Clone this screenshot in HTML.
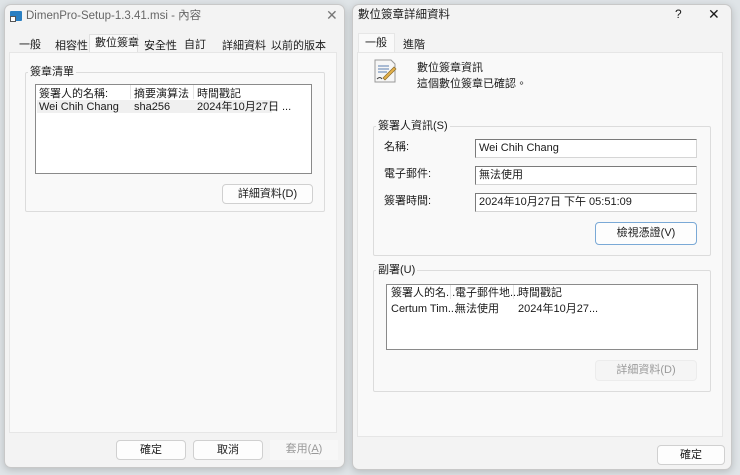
<!DOCTYPE html>
<html><head><meta charset="utf-8"><style>
*{box-sizing:border-box;margin:0;padding:0}
body{width:740px;height:475px;background:#dfe4e7;font-family:"Liberation Sans","Noto Sans CJK TC",sans-serif;font-size:11px;line-height:13px;color:#1a1a1a;position:relative;overflow:hidden}
.a{position:absolute}
.win{background:#f3f3f3;border:1px solid #c8c8c8;border-radius:7px;box-shadow:0 2px 8px rgba(0,0,0,.18)}
.panel{background:#f9f9f9;border:1px solid #e6e6e6}
.grp{border:1px solid #dcdcdc;border-radius:2px}
.lbl{background:#f9f9f9;padding:0 2px}
.btn{background:#fdfdfd;border:1px solid #d0d0d0;border-radius:4px;text-align:center;line-height:18px}
.list{background:#fff;border:1px solid #8a8a8a}
.tb{background:#fff;border:1px solid #d5d5d5;border-left:1px solid #7a7a7a;border-top:1px solid #7a7a7a;padding-left:3px;line-height:17px;font-size:11px}
</style></head><body>
<!-- left window -->
<div class="a win" style="left:4px;top:4px;width:341px;height:464px"></div>
<div class="a" style="left:10px;top:11px;width:12px;height:10px;background:#2a7fc2;border-radius:1px"></div>
<div class="a" style="left:10px;top:16px;width:6px;height:6px;background:#fff;border:1px solid #555"></div>
<div class="a" style="left:26px;top:10px;color:#666;font-size:11.5px">DimenPro-Setup-1.3.41.msi - 內容</div>
<div class="a" style="left:326px;top:9px;color:#777;font-size:14px">✕</div>
<div class="a" style="left:19px;top:39px">一般</div>
<div class="a" style="left:55px;top:40px">相容性</div>
<div class="a" style="left:89px;top:34px;width:49px;height:19px;background:#f9f9f9;border:1px solid #e0e0e0;border-bottom:none"></div>
<div class="a" style="left:95px;top:37px">數位簽章</div>
<div class="a" style="left:144px;top:40px">安全性</div>
<div class="a" style="left:184px;top:39px">自訂</div>
<div class="a" style="left:222px;top:40px">詳細資料</div>
<div class="a" style="left:271px;top:40px">以前的版本</div>
<div class="a panel" style="left:9px;top:52px;width:328px;height:381px"></div>
<div class="a grp" style="left:25px;top:72px;width:300px;height:140px"></div>
<div class="a lbl" style="left:28px;top:66px">簽章清單</div>
<div class="a list" style="left:35px;top:84px;width:277px;height:90px"></div>
<div class="a" style="left:39px;top:88px">簽署人的名稱:</div>
<div class="a" style="left:130px;top:85px;width:1px;height:14px;background:#e5e5e5"></div>
<div class="a" style="left:134px;top:88px">摘要演算法</div>
<div class="a" style="left:193px;top:85px;width:1px;height:14px;background:#e5e5e5"></div>
<div class="a" style="left:197px;top:88px">時間戳記</div>
<div class="a" style="left:37px;top:100px;width:235px;height:13px;background:#f0f0f0"></div>
<div class="a" style="left:39px;top:101px">Wei Chih Chang</div>
<div class="a" style="left:134px;top:101px">sha256</div>
<div class="a" style="left:197px;top:101px">2024年10月27日 ...</div>
<div class="a btn" style="left:222px;top:184px;width:91px;height:20px">詳細資料(D)</div>
<div class="a btn" style="left:116px;top:440px;width:70px;height:20px">確定</div>
<div class="a btn" style="left:193px;top:440px;width:70px;height:20px">取消</div>
<div class="a" style="left:270px;top:440px;width:68px;height:20px;background:#f7f7f7;text-align:center;line-height:18px;color:#999">套用(<u>A</u>)</div>
<!-- right window -->
<div class="a win" style="left:352px;top:4px;width:380px;height:466px"></div>
<div class="a" style="left:358px;top:9px;font-size:11.5px">數位簽章詳細資料</div>
<div class="a" style="left:675px;top:8px;font-size:12px">?</div>
<div class="a" style="left:708px;top:8px;font-size:14px">✕</div>
<div class="a" style="left:358px;top:33px;width:37px;height:20px;background:#f9f9f9;border:1px solid #e6e6e6;border-bottom:none"></div>
<div class="a" style="left:365px;top:37px">一般</div>
<div class="a" style="left:403px;top:39px">進階</div>
<div class="a panel" style="left:357px;top:52px;width:366px;height:385px"></div>
<svg class="a" style="left:373px;top:58px" width="26" height="26" viewBox="0 0 26 26"><path d="M2 2h16l4 4v18H2z" fill="#f6f6f6" stroke="#999"/><path d="M5 8h11M5 11h11M5 14h9" stroke="#5a7fb0"/><path d="M10 20l11-11 2 2-11 11z" fill="#e3b04a" stroke="#8a6a2a" stroke-width=".7"/><path d="M4 21q3-3 5 0" stroke="#444" fill="none"/></svg>
<div class="a" style="left:417px;top:62px">數位簽章資訊</div>
<div class="a" style="left:417px;top:78px">這個數位簽章已確認。</div>
<div class="a grp" style="left:373px;top:126px;width:338px;height:130px"></div>
<div class="a lbl" style="left:376px;top:120px">簽署人資訊(S)</div>
<div class="a" style="left:384px;top:141px">名稱:</div>
<div class="a tb" style="left:475px;top:139px;width:222px;height:19px">Wei Chih Chang</div>
<div class="a" style="left:384px;top:168px">電子郵件:</div>
<div class="a tb" style="left:475px;top:166px;width:222px;height:19px">無法使用</div>
<div class="a" style="left:384px;top:195px">簽署時間:</div>
<div class="a tb" style="left:475px;top:193px;width:222px;height:19px">2024年10月27日 下午 05:51:09</div>
<div class="a btn" style="left:595px;top:222px;width:102px;height:23px;border-color:#7aa9d6;line-height:21px">檢視憑證(V)</div>
<div class="a grp" style="left:373px;top:270px;width:338px;height:122px"></div>
<div class="a lbl" style="left:376px;top:264px">副署(U)</div>
<div class="a list" style="left:386px;top:284px;width:312px;height:66px"></div>
<div class="a" style="left:391px;top:287px">簽署人的名...</div>
<div class="a" style="left:450px;top:285px;width:1px;height:14px;background:#e5e5e5"></div>
<div class="a" style="left:455px;top:287px">電子郵件地...</div>
<div class="a" style="left:513px;top:285px;width:1px;height:14px;background:#e5e5e5"></div>
<div class="a" style="left:518px;top:287px">時間戳記</div>
<div class="a" style="left:391px;top:303px">Certum Tim...</div>
<div class="a" style="left:455px;top:303px">無法使用</div>
<div class="a" style="left:518px;top:303px">2024年10月27...</div>
<div class="a" style="left:595px;top:360px;width:102px;height:21px;background:#f5f5f5;border:1px solid #ececec;border-radius:4px;text-align:center;line-height:19px;color:#999">詳細資料(D)</div>
<div class="a btn" style="left:657px;top:445px;width:68px;height:20px">確定</div>
</body></html>
